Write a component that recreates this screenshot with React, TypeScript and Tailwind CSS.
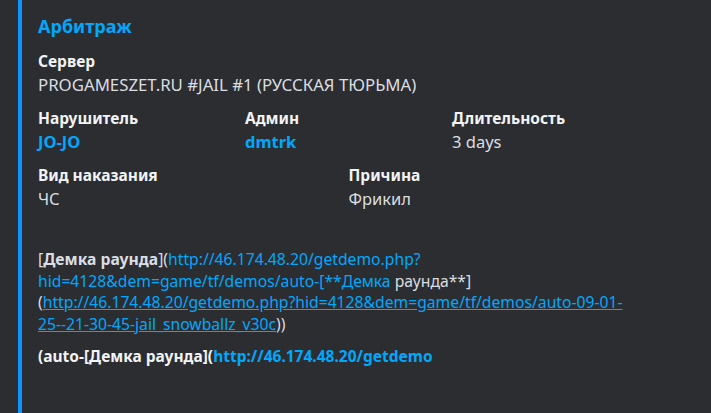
import React from "react";

const link = "text-[#00a8fc]";

function Field({ name, value, className = "", valueClass = "text-[16.5px]" }: { name: React.ReactNode; value: React.ReactNode; className?: string; valueClass?: string }) {
  return (
    <div className={"flex flex-col " + className}>
      <div className="text-[15.5px] leading-[24px] font-bold text-[#f2f3f5]">{name}</div>
      <div className={"leading-[24px] text-[#dbdee1] " + valueClass}>{value}</div>
    </div>
  );
}

export default function App() {
  return (
    <div
      className="w-[711px] h-[413px] overflow-hidden bg-[#2b2d31] pl-[18px]"
      style={{ fontFamily: '"Noto Sans", "Open Sans", sans-serif' }}
    >
      <div className="w-[649px] h-[413px] bg-[#2b2d31] border-l-4 border-[#0b95fe] pl-4 pr-4 pt-[14px]">
        <div className="text-[18px] leading-[24px] font-bold text-[#00a8fc]">Арбитраж</div>
        <div className="mt-[11px] grid grid-cols-12 gap-x-2 gap-y-[9px] w-[613px]">
          <Field className="col-span-12" valueClass="text-[16.8px]" name="Сервер" value="PROGAMESZET.RU #JAIL #1 (РУССКАЯ ТЮРЬМА)" />
          <Field className="col-span-4" name="Нарушитель" value={<span className={link + " font-bold"}>JO-JO</span>} />
          <Field className="col-span-4" name="Админ" value={<span className={link + " font-bold"}>dmtrk</span>} />
          <Field className="col-span-4" name="Длительность" value="3 days" />
          <Field className="col-span-6" name="Вид наказания" value="ЧС" />
          <Field className="col-span-6" name="Причина" value="Фрикил" />
        </div>
        <div className="mt-[38px] w-[613px] text-[15.7px] leading-[21.5px] text-[#dbdee1] whitespace-nowrap">
          <div>
            [<span className="font-bold">Демка раунда</span>](<span className={link}>http://46.174.48.20/getdemo.php?</span>
          </div>
          <div>
            <span className={link}>hid=4128&amp;dem=game/tf/demos/auto-[**Демка</span> раунда**]
          </div>
          <div>
            (<span className={link + " underline"}>http://46.174.48.20/getdemo.php?hid=4128&amp;dem=game/tf/demos/auto-09-01-</span>
          </div>
          <div>
            <span className={link + " underline"}>25--21-30-45-jail_snowballz_v30c</span>))
          </div>
        </div>
        <div className="mt-[9px] text-[15.5px] leading-[24px] font-bold text-[#f2f3f5]">
          (auto-[Демка раунда](<span className={link}>http://46.174.48.20/getdemo</span>
        </div>
      </div>
    </div>
  );
}
